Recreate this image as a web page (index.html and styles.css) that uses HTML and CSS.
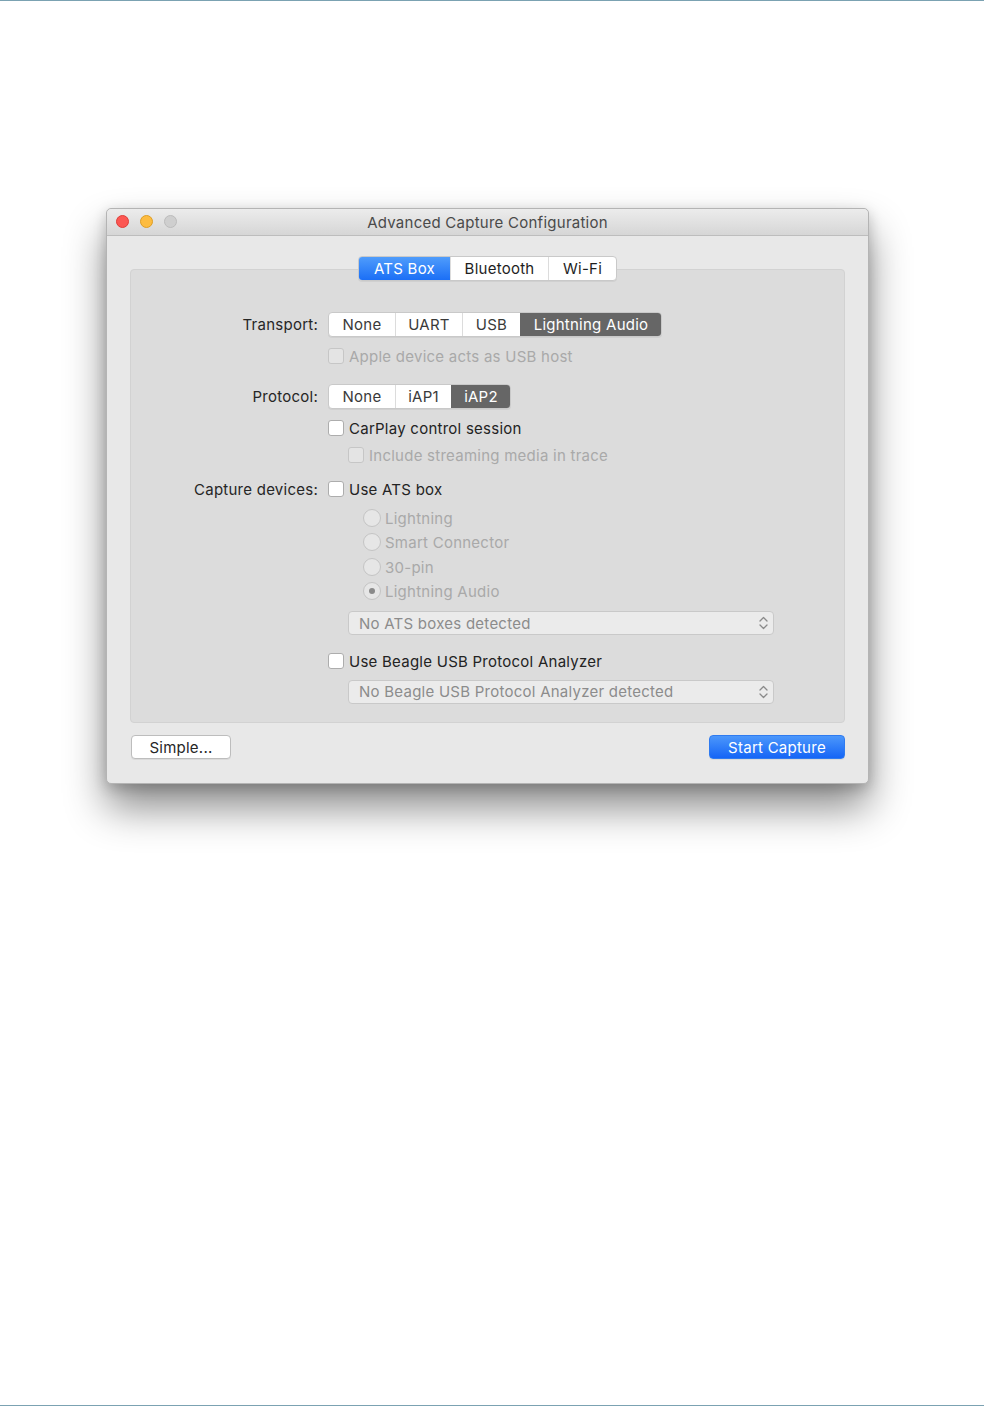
FILE: index.html
```html
<!DOCTYPE html>
<html lang="en">
<head>
    <meta charset="UTF-8">
    <title>Advanced Capture Configuration</title>
    <link rel="stylesheet" href="styles.css">
</head>
<body>
<div class="page">
    <div class="window">
        <div class="titlebar">
            <div class="lights">
                <span class="light red"></span>
                <span class="light yellow"></span>
                <span class="light gray"></span>
            </div>
            <div class="title">Advanced Capture Configuration</div>
        </div>

        <div class="content">
            <div class="tabs">
                <div class="seg-group tab-group">
                    <div class="seg tab on">ATS Box</div>
                    <div class="seg tab">Bluetooth</div>
                    <div class="seg tab">Wi-Fi</div>
                </div>
            </div>

            <div class="box">
                <div class="form">
                    <div class="lbl">Transport:</div>
                    <div class="ctl">
                        <div class="seg-group">
                            <div class="seg w-none">None</div>
                            <div class="seg w-uart">UART</div>
                            <div class="seg w-usb">USB</div>
                            <div class="seg w-la dark">Lightning Audio</div>
                        </div>
                    </div>
                    <div class="ctl">
                        <label class="check off"><span class="box-ic"></span>Apple device acts as USB host</label>
                    </div>

                    <div class="lbl">Protocol:</div>
                    <div class="ctl">
                        <div class="seg-group">
                            <div class="seg w-none">None</div>
                            <div class="seg w-iap1">iAP1</div>
                            <div class="seg w-iap2 dark">iAP2</div>
                        </div>
                    </div>
                    <div class="ctl">
                        <label class="check"><span class="box-ic"></span>CarPlay control session</label>
                    </div>
                    <div class="ctl indent">
                        <label class="check off"><span class="box-ic"></span>Include streaming media in trace</label>
                    </div>

                    <div class="lbl">Capture devices:</div>
                    <div class="ctl">
                        <label class="check"><span class="box-ic"></span>Use ATS box</label>
                    </div>
                    <div class="ctl radio-in">
                        <label class="radio"><span class="dot"></span>Lightning</label>
                    </div>
                    <div class="ctl radio-in">
                        <label class="radio"><span class="dot"></span>Smart Connector</label>
                    </div>
                    <div class="ctl radio-in">
                        <label class="radio"><span class="dot"></span>30-pin</label>
                    </div>
                    <div class="ctl radio-in">
                        <label class="radio sel"><span class="dot"></span>Lightning Audio</label>
                    </div>
                    <div class="ctl indent">
                        <div class="popup">No ATS boxes detected
                            <svg class="arrows" width="9" height="14" viewBox="0 0 9 14"><path d="M1 5 L4.5 1.5 L8 5 M1 9 L4.5 12.5 L8 9" fill="none" stroke="#8a8a8a" stroke-width="1.3" stroke-linecap="round" stroke-linejoin="round"/></svg>
                        </div>
                    </div>
                    <div class="ctl">
                        <label class="check"><span class="box-ic"></span>Use Beagle USB Protocol Analyzer</label>
                    </div>
                    <div class="ctl indent">
                        <div class="popup">No Beagle USB Protocol Analyzer detected
                            <svg class="arrows" width="9" height="14" viewBox="0 0 9 14"><path d="M1 5 L4.5 1.5 L8 5 M1 9 L4.5 12.5 L8 9" fill="none" stroke="#8a8a8a" stroke-width="1.3" stroke-linecap="round" stroke-linejoin="round"/></svg>
                        </div>
                    </div>
                </div>
            </div>

            <div class="buttons">
                <button class="btn">Simple...</button>
                <button class="btn primary">Start Capture</button>
            </div>
        </div>
    </div>
</div>
</body>
</html>
```

FILE: styles.css
```css
*{
    box-sizing: border-box;
}
body{
    margin: 0;
    background: #fff;
    font-family: Inter, "Liberation Sans", sans-serif;
    font-size: 15px;
    letter-spacing: 0.25px;
    color: #262626;
}
.page{
    height: 1406px;
    border-top: 1px solid #7ba2b2;
    border-bottom: 1px solid #7ba2b2;
    padding-top: 207px;
}
.window{
    width: 763px;
    height: 576px;
    margin-left: 106px;
    background: #e8e8e8;
    border: 1px solid #b4b4b4;
    border-radius: 5px;
    box-shadow: 0 24px 40px rgba(0, 0, 0, 0.45), 0 4px 14px rgba(0, 0, 0, 0.2);
}
.titlebar{
    position: relative;
    height: 27px;
    background: linear-gradient(#ececec, #d6d6d6);
    border-bottom: 1px solid #bdbdbd;
    border-radius: 5px 5px 0 0;
    display: flex;
    align-items: center;
    justify-content: center;
}
.lights{
    position: absolute;
    left: 9px;
    top: 6px;
    display: flex;
    gap: 11px;
}
.light{
    width: 13px;
    height: 13px;
    border-radius: 50%;
}
.red{
    background: #fc5753;
    border: 1px solid #df3d38;
}
.yellow{
    background: #fdbc40;
    border: 1px solid #de9e25;
}
.gray{
    background: #cfcfcf;
    border: 1px solid #bcbcbc;
}
.title{
    color: #4a4a4a;
    font-size: 15px;
}
.content{
    padding: 20px 23px 0 23px;
}
.tabs{
    display: flex;
    justify-content: center;
    position: relative;
    z-index: 1;
}
.box{
    margin-top: -12px;
    height: 454px;
    background: #dcdcdc;
    border: 1px solid #d2d2d2;
    border-radius: 4px;
    padding-top: 42px;
}
.form{
    display: grid;
    grid-template-columns: 187px 1fr;
    grid-template-rows: 25px 38px 42px 22px 32px 36px 22px 26px 24px 24px 40px 36px 25px;
    column-gap: 10px;
}
.lbl{
    grid-column: 1;
    text-align: right;
    align-self: center;
}
.ctl{
    grid-column: 2;
    display: flex;
    align-items: center;
}
.indent{
    padding-left: 20px;
}
.radio-in{
    padding-left: 35px;
}

/* segmented controls */
.seg-group{
    display: flex;
    height: 25px;
    background: #fff;
    border: 1px solid #c9c9c9;
    border-radius: 4px;
    box-shadow: 0 1px 0 rgba(0, 0, 0, 0.05);
    overflow: hidden;
}
.seg{
    display: flex;
    align-items: center;
    justify-content: center;
    color: #3a3a3a;
    border-left: 1px solid #dcdcdc;
}
.seg:first-child{
    border-left: none;
}
.seg.dark{
    background: #666;
    color: #fff;
    border-left-color: #666;
}
.w-none{ width: 66px; }
.w-uart{ width: 67px; }
.w-usb{ width: 58px; }
.w-la{ width: 141px; }
.w-iap1{ width: 56px; }
.w-iap2{ width: 59px; }

.tab-group{
    height: 25px;
}
.tab{
    color: #1e1e1e;
    padding: 0 13px;
}
.tab:nth-child(1){ width: 91px; }
.tab:nth-child(2){ width: 98px; }
.tab:nth-child(3){ width: 68px; }
.tab.on{
    background: linear-gradient(#4f9cfb, #1b6ff6);
    color: #fff;
    border-left: none;
}

/* checkboxes and radios */
.check, .radio{
    display: flex;
    align-items: center;
    gap: 5px;
    color: #232323;
}
.box-ic{
    width: 16px;
    height: 16px;
    background: #fff;
    border: 1px solid #adadad;
    border-radius: 3px;
}
.check.off{
    color: #a9a9a9;
}
.check.off .box-ic{
    background: #e4e4e4;
    border-color: #c6c6c6;
}
.radio{
    color: #a9a9a9;
    gap: 4px;
}
.dot{
    width: 18px;
    height: 18px;
    border-radius: 50%;
    background: #e6e6e6;
    border: 1px solid #c4c4c4;
    display: flex;
    align-items: center;
    justify-content: center;
}
.radio.sel .dot::after{
    content: "";
    width: 6px;
    height: 6px;
    border-radius: 50%;
    background: #8a8a8a;
}

/* popups */
.popup{
    position: relative;
    width: 426px;
    height: 24px;
    display: flex;
    align-items: center;
    padding-left: 10px;
    background: #ebebeb;
    border: 1px solid #c9c9c9;
    border-radius: 4px;
    color: #8c8c8c;
}
.arrows{
    position: absolute;
    right: 5px;
    top: 4px;
}

/* bottom buttons */
.buttons{
    display: flex;
    justify-content: space-between;
    margin-top: 12px;
    padding: 0 0 0 1px;
}
.btn{
    height: 24px;
    font: inherit;
    letter-spacing: inherit;
    color: #262626;
    background: #fff;
    border: 1px solid #bdbdbd;
    border-radius: 4px;
    box-shadow: 0 1px 0 rgba(0, 0, 0, 0.06);
    width: 100px;
    padding: 0;
}
.btn.primary{
    width: 136px;
    color: #fff;
    background: linear-gradient(#4c97fb, #1565f6);
    border-color: #2f7bf0;
}
```
